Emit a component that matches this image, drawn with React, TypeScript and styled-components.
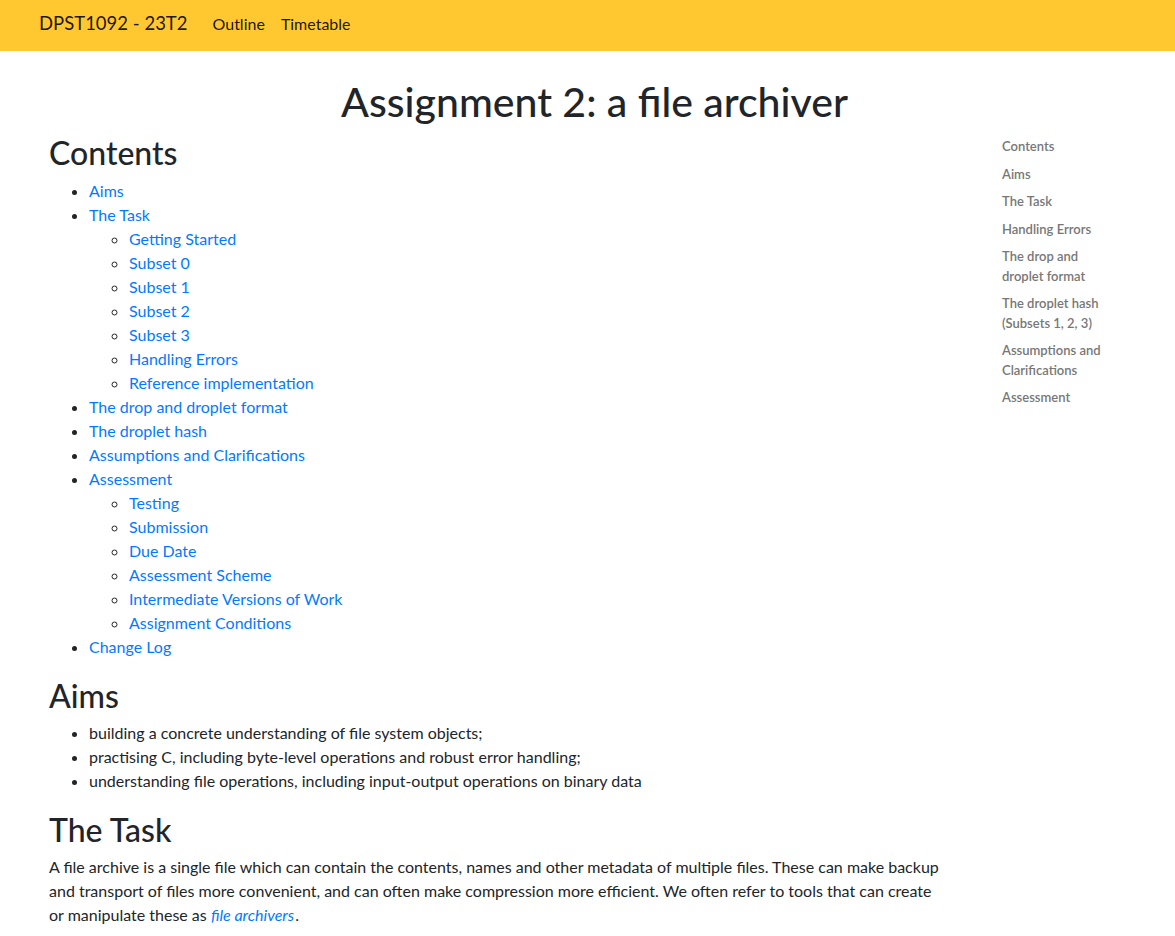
import React from "react";
import styled, { createGlobalStyle } from "styled-components";

const GlobalStyle = createGlobalStyle`
  body {
    margin: 0;
    background: #fff;
    color: #212529;
    font-family: Lato, "Open Sans", sans-serif;
    font-size: 16px;
    line-height: 1.5;
  }
`;

type TocItem = { label: string; children?: string[] };

const contents: TocItem[] = [
  { label: "Aims" },
  {
    label: "The Task",
    children: [
      "Getting Started",
      "Subset 0",
      "Subset 1",
      "Subset 2",
      "Subset 3",
      "Handling Errors",
      "Reference implementation",
    ],
  },
  { label: "The drop and droplet format" },
  { label: "The droplet hash" },
  { label: "Assumptions and Clarifications" },
  {
    label: "Assessment",
    children: [
      "Testing",
      "Submission",
      "Due Date",
      "Assessment Scheme",
      "Intermediate Versions of Work",
      "Assignment Conditions",
    ],
  },
  { label: "Change Log" },
];

const sideLinks = [
  "Contents",
  "Aims",
  "The Task",
  "Handling Errors",
  "The drop and droplet format",
  "The droplet hash (Subsets 1, 2, 3)",
  "Assumptions and Clarifications",
  "Assessment",
];

const aims = [
  "building a concrete understanding of file system objects;",
  "practising C, including byte-level operations and robust error handling;",
  "understanding file operations, including input-output operations on binary data",
];

const App = (): JSX.Element => {
  return (
    <>
      <GlobalStyle />
      <Navbar>
        <Brand>DPST1092 - 23T2</Brand>
        <NavLink>Outline</NavLink>
        <NavLink>Timetable</NavLink>
      </Navbar>
      <Page>
        <Title>Assignment 2: a file archiver</Title>
        <Row>
          <Main>
            <SectionTitle>Contents</SectionTitle>
            <List>
              {contents.map((item) => (
                <li key={item.label}>
                  <Link>{item.label}</Link>
                  {item.children && (
                    <SubList>
                      {item.children.map((c) => (
                        <li key={c}>
                          <Link>{c}</Link>
                        </li>
                      ))}
                    </SubList>
                  )}
                </li>
              ))}
            </List>

            <SectionTitle>Aims</SectionTitle>
            <List>
              {aims.map((a) => (
                <li key={a}>{a}</li>
              ))}
            </List>

            <SectionTitle>The Task</SectionTitle>
            <Paragraph>
              A file archive is a single file which can contain the contents, names and other metadata of
              multiple files. These can make backup and transport of files more convenient, and can often make
              compression more efficient. We often refer to tools that can create or manipulate these as{" "}
              <Link>
                <em>file archivers</em>
              </Link>
              .
            </Paragraph>
          </Main>
          <Sidebar>
            {sideLinks.map((s) => (
              <SideLink key={s}>{s}</SideLink>
            ))}
          </Sidebar>
        </Row>
      </Page>
    </>
  );
};

export default App;

const Navbar = styled.nav`
  display: flex;
  align-items: center;
  height: 51px;
  padding: 0 39px 4px;
  background: #ffc831;
  box-sizing: border-box;
`;

const Brand = styled.span`
  font-size: 18.5px;
  color: rgba(0, 0, 0, 0.9);
  margin-right: 17px;
`;

const NavLink = styled.span`
  font-size: 16px;
  color: rgba(0, 0, 0, 0.9);
  padding: 0 8px;
`;

const Page = styled.div`
  padding: 26px 35px 0 49px;
`;

const Title = styled.h1`
  margin: 0 0 8px;
  font-size: 41px;
  font-weight: 500;
  line-height: 1.2;
  text-align: center;
`;

const Row = styled.div`
  display: grid;
  grid-template-columns: 894px 120px;
  column-gap: 59px;
  align-items: start;
`;

const Main = styled.main`
  min-width: 0;
`;

const SectionTitle = styled.h2`
  margin: 0 0 6px;
  font-size: 32px;
  font-weight: 500;
  line-height: 1.2;
`;

const List = styled.ul`
  margin: 0 0 18px;
  padding-left: 40px;
`;

const SubList = styled.ul`
  margin: 0;
  padding-left: 40px;
  list-style-type: circle;
`;

const Link = styled.a`
  color: #007bff;
  text-decoration: none;

  em {
    padding-right: 1px;
  }
`;

const Paragraph = styled.p`
  margin: 0 0 16px;
`;

const Sidebar = styled.nav`
  display: flex;
  flex-direction: column;
  margin-top: -1px;
`;

const SideLink = styled.a`
  display: block;
  padding: 4px 0;
  font-size: 13px;
  line-height: 1.5;
  font-weight: 600;
  color: #777;
`;
